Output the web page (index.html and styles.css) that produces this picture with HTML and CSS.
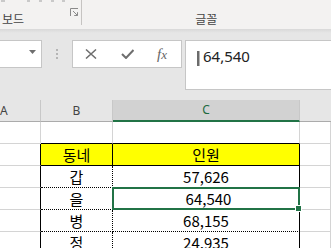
FILE: index.html
```html
<!DOCTYPE html>
<html lang="ko">
<head>
    <meta charset="UTF-8">
    <title>엑셀 - 동네별 인원</title>
    <link rel="stylesheet" href="styles.css">
</head>
<body>
    <!-- 리본 아래쪽 (클립보드 / 글꼴 그룹) -->
    <div class="ribbon">
        <div class="grp grp-clip">
            <div class="ticks">
                <i class="t1"></i><i class="t2"></i><i class="t3"></i><i class="t4"></i><i class="t5"></i>
            </div>
            <div class="grp-row">
                <span class="glabel">보드</span>
                <svg class="launcher" width="9" height="9" viewBox="0 0 9 9">
                    <path d="M0.5 8V0.5H8" fill="none" stroke="#8a8a8a" stroke-width="1"/>
                    <path d="M3 3L7.5 7.5M7.5 4.2V7.5H4.2" fill="none" stroke="#8a8a8a" stroke-width="1"/>
                </svg>
            </div>
        </div>
        <div class="sep"></div>
        <div class="grp grp-font">
            <div class="ticks"></div>
            <span class="glabel">글꼴</span>
        </div>
    </div>

    <!-- 수식 입력줄 -->
    <div class="fbar">
        <div class="namebox">
            <svg width="7" height="4" viewBox="0 0 7 4"><path d="M0 0H7L3.5 4Z" fill="#6e6e6e"/></svg>
        </div>
        <div class="grip"><i></i><i></i><i></i></div>
        <div class="btns">
            <svg class="ic-x" width="12" height="10" viewBox="0 0 12 10">
                <path d="M1 0.5L11 9.5M11 0.5L1 9.5" stroke="#6e6e6e" stroke-width="1.5" fill="none"/>
            </svg>
            <svg class="ic-ok" width="13" height="10" viewBox="0 0 13 10">
                <path d="M1 5L5 9L12.5 1" stroke="#6e6e6e" stroke-width="2" fill="none"/>
            </svg>
            <span class="fx">f<i>x</i></span>
        </div>
        <div class="finput"><span class="caret"></span>64,540</div>
    </div>

    <!-- 시트 -->
    <div class="sheet">
        <div class="row hd">
            <div class="cell col-a">A</div>
            <div class="cell">B</div>
            <div class="cell on">C</div>
            <div class="cell last"></div>
        </div>
        <div class="row">
            <div class="cell"></div>
            <div class="cell top"></div>
            <div class="cell top"></div>
            <div class="cell"></div>
        </div>
        <div class="row">
            <div class="cell edge"></div>
            <div class="cell th mid">동네</div>
            <div class="cell th end">인원</div>
            <div class="cell"></div>
        </div>
        <div class="row">
            <div class="cell edge"></div>
            <div class="cell td mid-dot">갑</div>
            <div class="cell td end">57,626</div>
            <div class="cell"></div>
        </div>
        <div class="row">
            <div class="cell edge"></div>
            <div class="cell td mid-dot">을</div>
            <div class="cell td end sel nudge">64,540</div>
            <div class="cell"></div>
        </div>
        <div class="row">
            <div class="cell edge"></div>
            <div class="cell td mid-dot">병</div>
            <div class="cell td end">68,155</div>
            <div class="cell"></div>
        </div>
        <div class="row">
            <div class="cell edge"></div>
            <div class="cell td mid-dot">정</div>
            <div class="cell td end">24,935</div>
            <div class="cell"></div>
        </div>
    </div>
</body>
</html>
```

FILE: styles.css
```css
*{
    margin:0;
    padding:0;
}
body{
    width:331px;
    height:248px;
    overflow:hidden;
    background:#fff;
    font-family:"Noto Sans","Noto Sans CJK KR",sans-serif;
}

/* 리본 */
.ribbon{
    display:flex;
    height:29px;
    background:#f3f2f1;
}
.grp{
    display:flex;
    flex-direction:column;
}
.grp-clip{
    width:84px;
}
.grp-font{
    width:260px;
    align-items:center;
}
.ticks{
    display:flex;
    height:3px;
}
.ticks i{
    display:block;
    width:3px;
    height:2px;
    background:#c9c9c9;
}
.ticks .t1{margin-left:1px;width:4px;}
.ticks .t2{margin-left:22px;}
.ticks .t3{margin-left:9px;}
.ticks .t4{margin-left:9px;}
.ticks .t5{margin-left:8px;}
.grp-row{
    display:flex;
    align-items:flex-start;
}
.glabel{
    margin-top:10px;
    padding-left:2px;
    font:12px/12px "Noto Sans CJK KR",sans-serif;
    color:#444;
}
.grp-font .glabel{
    padding-left:0;
}
.launcher{
    margin:5px 2px 0 auto;
}
.sep{
    width:1px;
    height:25px;
    background:#c6c4c2;
}

/* 수식 입력줄 */
.fbar{
    display:flex;
    align-items:flex-start;
    height:71px;
    padding-top:11px;
    box-sizing:border-box;
    background:linear-gradient(#d8d8d8,#e6e6e6 4px);
}
.namebox{
    display:flex;
    justify-content:flex-end;
    width:52px;
    height:28px;
    margin-left:-10px;
    padding:9px 5px 0 0;
    box-sizing:border-box;
    border:1px solid #c6c6c6;
    background:#fff;
}
.grip{
    display:flex;
    flex-direction:column;
    gap:2px;
    margin:9px 0 0 14px;
}
.grip i{
    display:block;
    width:2px;
    height:2px;
    background:#b5b5b5;
}
.btns{
    display:flex;
    align-items:center;
    width:110px;
    height:28px;
    margin-left:14px;
    padding-left:12px;
    box-sizing:border-box;
    border:1px solid #c6c6c6;
    background:#fff;
}
.ic-ok{
    margin-left:24px;
}
.fx{
    margin-left:23px;
    font:italic 15px/15px "Liberation Serif",serif;
    color:#666;
}
.fx i{
    font-size:13px;
}
.finput{
    display:flex;
    align-items:flex-start;
    flex:1;
    height:50px;
    margin:0 -5px 0 3px;
    padding:5px 0 0 11px;
    box-sizing:border-box;
    border:1px solid #c6c6c6;
    background:#fff;
    font:15px/20px "Noto Sans",sans-serif;
    color:#222;
}
.caret{
    width:2px;
    height:15px;
    margin:5px 3px 0 0;
    border-right:1px solid #b5b5b5;
    background:#6b6b6b;
}

/* 시트 */
.row{
    display:grid;
    grid-template-columns:41px 72px 187px 1fr;
    height:22px;
}
.cell{
    display:flex;
    align-items:center;
    justify-content:center;
    box-sizing:border-box;
    border-right:1px solid #d4d4d4;
    border-bottom:1px solid #d4d4d4;
    font:15px/20px "Noto Sans CJK KR",sans-serif;
    color:#000;
}
.hd .cell{
    background:#e6e6e6;
    border-right-color:#c8c8c8;
    border-bottom-color:#ababab;
    font:12px/20px "Noto Sans",sans-serif;
    color:#444;
}
.hd .col-a{
    justify-content:flex-start;
}
.hd .on{
    background:#d2d2d2;
    border-bottom:2px solid #217346;
    color:#1b6a3e;
}
.hd .last{
    border-right:0;
}
.top{
    border-bottom-color:#000;
}
.edge{
    border-right-color:#000;
}
.th{
    background:#ffff00;
    border-bottom-color:#000;
}
.mid{
    border-right-color:#000;
}
.mid-dot{
    border-right:1px dotted #000;
}
.end{
    border-right-color:#000;
}
.td{
    border-bottom:1px dotted #000;
}
.nudge{
    padding-left:5px;
}
.sel{
    position:relative;
}
.sel::after{
    content:"";
    position:absolute;
    top:-1px;
    left:-1px;
    right:-1px;
    bottom:-1px;
    border:2px solid #217346;
}
.sel::before{
    content:"";
    position:absolute;
    right:-3px;
    bottom:-3px;
    width:7px;
    height:7px;
    box-sizing:border-box;
    border:1px solid #fff;
    background:#217346;
    z-index:1;
}
```
